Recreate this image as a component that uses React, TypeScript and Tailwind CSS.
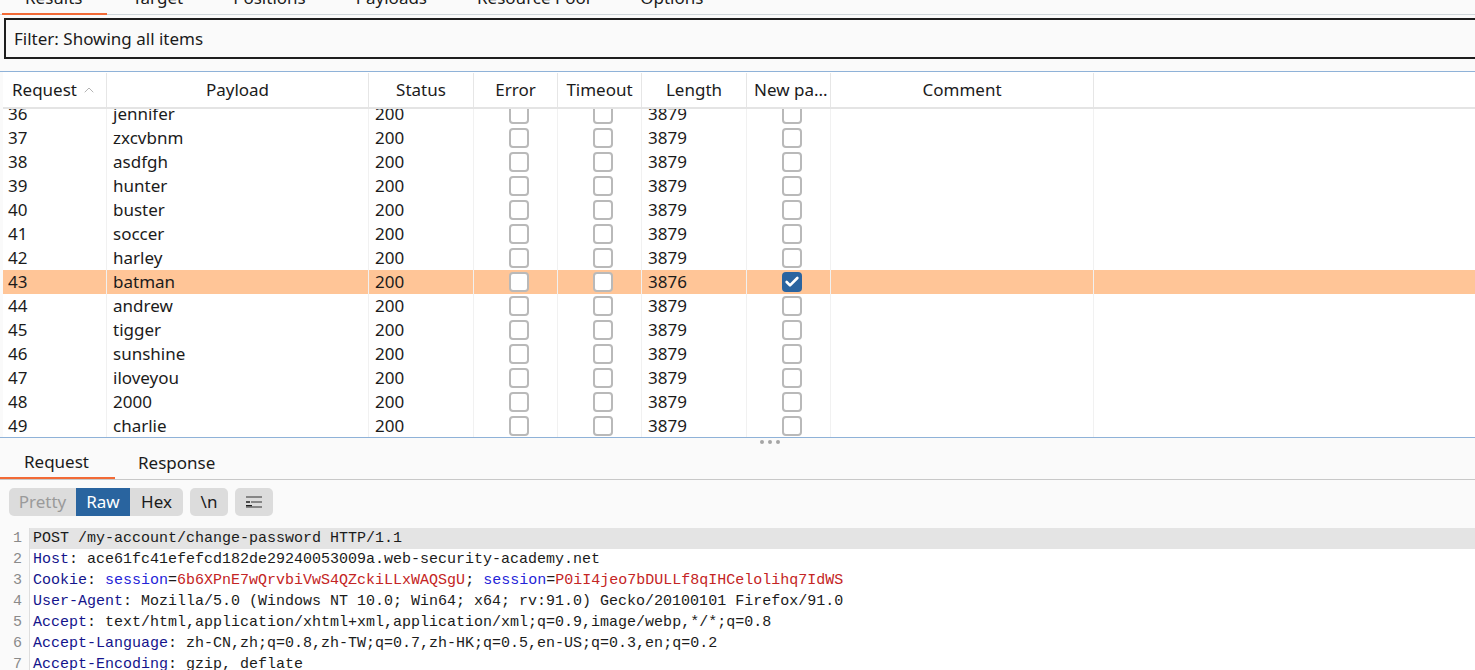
import { Check, ChevronUp } from 'lucide-react'

type Row = { id: number; payload: string; length: number; fresh?: boolean }

const rows: Row[] = [
  { id: 36, payload: 'jennifer', length: 3879 },
  { id: 37, payload: 'zxcvbnm', length: 3879 },
  { id: 38, payload: 'asdfgh', length: 3879 },
  { id: 39, payload: 'hunter', length: 3879 },
  { id: 40, payload: 'buster', length: 3879 },
  { id: 41, payload: 'soccer', length: 3879 },
  { id: 42, payload: 'harley', length: 3879 },
  { id: 43, payload: 'batman', length: 3876, fresh: true },
  { id: 44, payload: 'andrew', length: 3879 },
  { id: 45, payload: 'tigger', length: 3879 },
  { id: 46, payload: 'sunshine', length: 3879 },
  { id: 47, payload: 'iloveyou', length: 3879 },
  { id: 48, payload: '2000', length: 3879 },
  { id: 49, payload: 'charlie', length: 3879 },
]

const topTabs = ['Results', 'Target', 'Positions', 'Payloads', 'Resource Pool', 'Options']

function Box({ checked }: { checked?: boolean }) {
  if (checked) {
    return (
      <span className="flex h-[20px] w-[20px] items-center justify-center rounded-[4px] bg-[#2a64a0]">
        <Check size={16} strokeWidth={4} className="text-white" />
      </span>
    )
  }
  return <span className="block h-[20px] w-[20px] rounded-[4px] border-2 border-[#b9b9b9] bg-white" />
}

function Header() {
  const cell = 'flex h-full items-center justify-center border-r border-[#e6e6e6]'
  return (
    <div className="flex h-[37px] border-b-2 border-[#e4e4e4] bg-white pt-[1px] text-[17px] text-[#1b1b1b]">
      <div className="flex h-full w-[104px] items-center justify-between border-r border-[#e6e6e6] pl-[9px] pr-[9px]">
        <span>Request</span>
        <ChevronUp size={16} strokeWidth={1.5} className="text-[#b4b4b4]" />
      </div>
      <div className={`${cell} w-[262px]`}>Payload</div>
      <div className={`${cell} w-[105px]`}>Status</div>
      <div className={`${cell} w-[84px]`}>Error</div>
      <div className={`${cell} w-[84px]`}>Timeout</div>
      <div className={`${cell} w-[105px]`}>Length</div>
      <div className="flex h-full w-[84px] items-center border-r border-[#e6e6e6] pl-[7px] whitespace-nowrap">New pa...</div>
      <div className={`${cell} w-[263px]`}>Comment</div>
      <div className="flex-1" />
    </div>
  )
}

function TableRow({ row }: { row: Row }) {
  const line = 'flex h-full items-center border-r border-[#f1f1f1]'
  return (
    <div className={`flex h-[24px] text-[17px] text-[#1b1b1b] ${row.fresh ? 'bg-[#ffc597]' : ''}`}>
      <div className={`${line} w-[104px] pl-[5px]`}>{row.id}</div>
      <div className={`${line} w-[262px] pl-[6px]`}>{row.payload}</div>
      <div className={`${line} w-[105px] pl-[6px]`}>200</div>
      <div className={`${line} w-[84px] justify-center pl-[6px]`}>
        <Box />
      </div>
      <div className={`${line} w-[84px] justify-center pl-[6px]`}>
        <Box />
      </div>
      <div className={`${line} w-[105px] pl-[6px]`}>{row.length}</div>
      <div className={`${line} w-[84px] justify-center pl-[6px]`}>
        <Box checked={row.fresh} />
      </div>
      <div className={`${line} w-[263px]`} />
    </div>
  )
}

function WrapIcon() {
  return (
    <svg width="16" height="12" viewBox="0 0 16 12" fill="none">
      <path d="M0 1h16M5 6h11M0 11h16" stroke="#6a6a6a" strokeWidth="1.4" />
      <path d="M0 6h4M0 9.6h6" stroke="#1e1e1e" strokeWidth="1.4" />
    </svg>
  )
}

const reqLines: { name?: string; rest: React.ReactNode }[] = [
  { rest: 'POST /my-account/change-password HTTP/1.1' },
  { name: 'Host', rest: ' ace61fc41efefcd182de29240053009a.web-security-academy.net' },
  {
    name: 'Cookie',
    rest: (
      <>
        {' '}
        <span className="text-[#2424d8]">session</span>=<span className="text-[#c42424]">6b6XPnE7wQrvbiVwS4QZckiLLxWAQSgU</span>;{' '}
        <span className="text-[#2424d8]">session</span>=<span className="text-[#c42424]">P0iI4jeo7bDULLf8qIHCelolihq7IdWS</span>
      </>
    ),
  },
  { name: 'User-Agent', rest: ' Mozilla/5.0 (Windows NT 10.0; Win64; x64; rv:91.0) Gecko/20100101 Firefox/91.0' },
  { name: 'Accept', rest: ' text/html,application/xhtml+xml,application/xml;q=0.9,image/webp,*/*;q=0.8' },
  { name: 'Accept-Language', rest: ' zh-CN,zh;q=0.8,zh-TW;q=0.7,zh-HK;q=0.5,en-US;q=0.3,en;q=0.2' },
  { name: 'Accept-Encoding', rest: ' gzip, deflate' },
]

export default function App() {
  return (
    <div className="h-[670px] w-[1475px] overflow-hidden bg-[#fafafa] font-['Noto_Sans',sans-serif] text-[#1b1b1b]">
      {/* attack tabs, scrolled mostly out of view */}
      <div className="flex h-[15px] border-b border-[#cfd6da] pl-[2px] text-[17px]">
        {topTabs.map((t, i) => (
          <div
            key={t}
            className={`h-[15px] overflow-hidden px-[25px] ${i === 0 ? 'border-b-2 border-[#f26a36] pl-[23px]' : ''}`}
          >
            <span className="mt-[-11px] block whitespace-nowrap leading-[17px]">{t}</span>
          </div>
        ))}
      </div>

      <div className="ml-[4px] mr-[-20px] mt-[3px] flex h-[41px] items-center border-2 border-[#1e1e1e] pl-[8px] text-[17px]">
        Filter: Showing all items
      </div>

      <div className="mt-[12px] border-t border-[#8fb2d8] pl-[3px]">
        <Header />
        <div className="h-[328px] overflow-hidden bg-white">
          <div className="mt-[-7px]">
            {rows.map((r) => (
              <TableRow key={r.id} row={r} />
            ))}
          </div>
        </div>
      </div>

      <div className="border-t border-[#8fb2d8]">
        <div className="flex h-[8px] items-center justify-center gap-[4px] pl-[65px]">
          <span className="h-[4px] w-[4px] rounded-full bg-[#a5a5a5]" />
          <span className="h-[4px] w-[4px] rounded-full bg-[#a5a5a5]" />
          <span className="h-[4px] w-[4px] rounded-full bg-[#a5a5a5]" />
        </div>
        <div className="flex h-[34px] border-b border-[#c8c8c8] text-[17px]">
          <div className="flex w-[115px] items-center border-b-2 border-[#f26a36] pl-[24px]">Request</div>
          <div className="flex items-center pl-[23px]">Response</div>
        </div>
      </div>

      <div className="flex h-[48px] items-start gap-[7px] pl-[9px] pt-[8px] text-[17px]">
        <div className="flex h-[28px] overflow-hidden rounded-[5px] bg-[#dcdcdc]">
          <span className="flex w-[67px] items-center justify-center text-[#9a9a9a]">Pretty</span>
          <span className="flex w-[54px] items-center justify-center bg-[#29649f] text-white">Raw</span>
          <span className="flex w-[53px] items-center justify-center">Hex</span>
        </div>
        <span className="flex h-[28px] w-[38px] items-center justify-center rounded-[5px] bg-[#dcdcdc]">\n</span>
        <span className="flex h-[28px] w-[38px] items-center justify-center rounded-[5px] bg-[#dcdcdc]">
          <WrapIcon />
        </span>
      </div>

      <div className="flex h-[200px] bg-white font-['Liberation_Mono',monospace] text-[15px] leading-[21px]">
        <div className="w-[30px] border-r border-[#dedede] bg-[#fafafa] pr-[7px] text-right text-[#8a8a8a]">
          {reqLines.map((_, i) => (
            <div key={i}>{i + 1}</div>
          ))}
        </div>
        <div className="flex-1">
          {reqLines.map((l, i) => (
            <div key={i} className={`whitespace-pre pl-[3px] ${i === 0 ? 'bg-[#e4e4e4]' : ''}`}>
              {l.name && <span className="text-[#14148c]">{l.name}</span>}
              {l.name && ':'}
              {l.rest}
            </div>
          ))}
        </div>
      </div>
    </div>
  )
}
